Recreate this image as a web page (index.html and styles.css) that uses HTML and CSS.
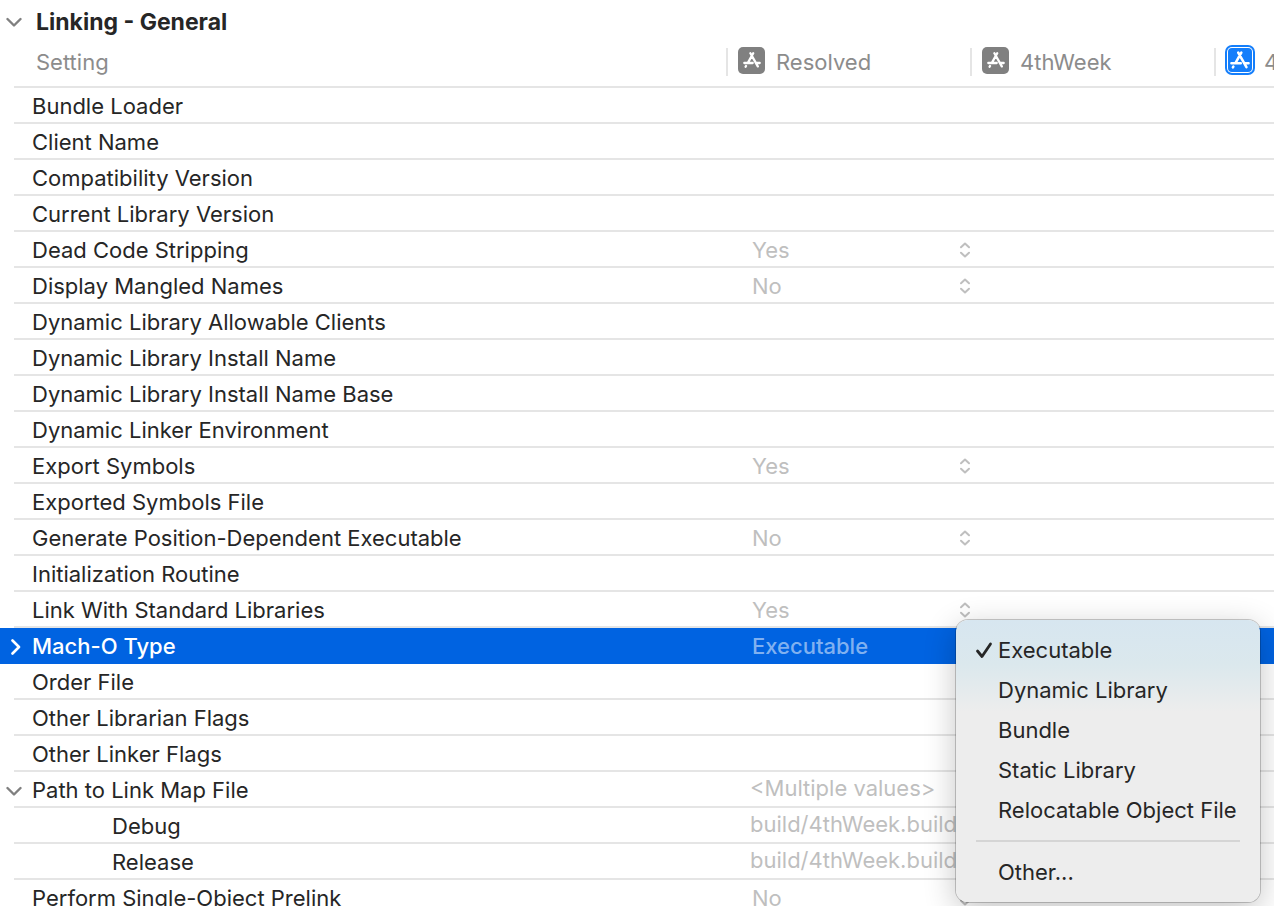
FILE: index.html
```
<!DOCTYPE html>
<html lang="en">
<head>
  <meta charset="UTF-8" />
  <meta name="viewport" content="width=device-width, initial-scale=1.0" />
  <title>Build Settings</title>
  <link rel="stylesheet" href="styles.css">
</head>
<body>
  <svg class="sprite" aria-hidden="true">
    <symbol id="down" viewBox="0 0 16 16">
      <path d="M1.500 5l6.500 6.500L14.500 5" fill="none" stroke="currentColor" stroke-width="2.4" stroke-linecap="round" stroke-linejoin="round" />
    </symbol>
    <symbol id="right" viewBox="0 0 16 16">
      <path d="M6.500 1.500L13 8l-6.500 6.500" fill="none" stroke="currentColor" stroke-width="2.6" stroke-linecap="round" stroke-linejoin="round" />
    </symbol>
    <symbol id="updown" viewBox="0 0 12 16">
      <path d="M2 5.200l4-3.700 4 3.700M2 10.800l4 3.700 4-3.700" fill="none" stroke="currentColor" stroke-width="2" stroke-linecap="round" stroke-linejoin="round" />
    </symbol>
    <symbol id="check" viewBox="0 0 18 18">
      <path d="M2.500 10l4.500 5.500L15.500 3" fill="none" stroke="currentColor" stroke-width="2.800" stroke-linecap="round" stroke-linejoin="round" />
    </symbol>
    <symbol id="app" viewBox="0 0 18 16">
      <g fill="none" stroke="#fff" stroke-width="2.300" stroke-linecap="round">
        <path d="M7.400 1.300L14.800 14.400M10.200 1.300L5 10.600M1.300 11h8.400M13.500 11h3.200M3 14l-.4.700" />
      </g>
    </symbol>
  </svg>

  <main class="settings">
    <h1 class="group-title">
      <button class="toggle" aria-label="Collapse Linking - General"><svg><use href="#down" /></svg></button>Linking - General
    </h1>

    <table>
      <colgroup>
        <col class="col-name">
        <col class="col-value">
        <col class="col-value">
        <col>
      </colgroup>
      <thead>
        <tr>
          <th class="name">Setting</th>
          <th><div class="head"><svg class="app-icon"><use href="#app" /></svg>Resolved</div></th>
          <th><div class="head"><svg class="app-icon"><use href="#app" /></svg>4thWeek</div></th>
          <th><div class="head"><svg class="app-icon project"><use href="#app" /></svg>4thWeek</div></th>
        </tr>
      </thead>
      <tbody>
        <tr><td class="name">Bundle Loader</td><td></td><td></td><td></td></tr>
        <tr><td class="name">Client Name</td><td></td><td></td><td></td></tr>
        <tr><td class="name">Compatibility Version</td><td></td><td></td><td></td></tr>
        <tr><td class="name">Current Library Version</td><td></td><td></td><td></td></tr>
        <tr>
          <td class="name"><label for="dead-code">Dead Code Stripping</label></td>
          <td><div class="popup"><select id="dead-code"><option>Yes</option><option>No</option></select><svg><use href="#updown" /></svg></div></td>
          <td></td><td></td>
        </tr>
        <tr>
          <td class="name"><label for="mangled">Display Mangled Names</label></td>
          <td><div class="popup"><select id="mangled"><option>No</option><option>Yes</option></select><svg><use href="#updown" /></svg></div></td>
          <td></td><td></td>
        </tr>
        <tr><td class="name">Dynamic Library Allowable Clients</td><td></td><td></td><td></td></tr>
        <tr><td class="name">Dynamic Library Install Name</td><td></td><td></td><td></td></tr>
        <tr><td class="name">Dynamic Library Install Name Base</td><td></td><td></td><td></td></tr>
        <tr><td class="name">Dynamic Linker Environment</td><td></td><td></td><td></td></tr>
        <tr>
          <td class="name"><label for="export">Export Symbols</label></td>
          <td><div class="popup"><select id="export"><option>Yes</option><option>No</option></select><svg><use href="#updown" /></svg></div></td>
          <td></td><td></td>
        </tr>
        <tr><td class="name">Exported Symbols File</td><td></td><td></td><td></td></tr>
        <tr>
          <td class="name"><label for="position">Generate Position-Dependent Executable</label></td>
          <td><div class="popup"><select id="position"><option>No</option><option>Yes</option></select><svg><use href="#updown" /></svg></div></td>
          <td></td><td></td>
        </tr>
        <tr><td class="name">Initialization Routine</td><td></td><td></td><td></td></tr>
        <tr>
          <td class="name"><label for="standard">Link With Standard Libraries</label></td>
          <td><div class="popup"><select id="standard"><option>Yes</option><option>No</option></select><svg><use href="#updown" /></svg></div></td>
          <td></td><td></td>
        </tr>
        <tr class="selected">
          <td class="name"><button class="toggle" aria-label="Expand Mach-O Type"><svg><use href="#right" /></svg></button><label for="mach-o">Mach-O Type</label></td>
          <td><div class="popup"><select id="mach-o"><option>Executable</option></select></div></td>
          <td class="menu-cell">
            <div class="menu" role="menu">
              <button role="menuitemradio" aria-checked="true"><svg><use href="#check" /></svg>Executable</button>
              <button role="menuitemradio" aria-checked="false">Dynamic Library</button>
              <button role="menuitemradio" aria-checked="false">Bundle</button>
              <button role="menuitemradio" aria-checked="false">Static Library</button>
              <button role="menuitemradio" aria-checked="false">Relocatable Object File</button>
              <hr>
              <button role="menuitem">Other...</button>
            </div>
          </td>
          <td></td>
        </tr>
        <tr><td class="name">Order File</td><td></td><td></td><td></td></tr>
        <tr><td class="name">Other Librarian Flags</td><td></td><td></td><td></td></tr>
        <tr><td class="name">Other Linker Flags</td><td></td><td></td><td></td></tr>
        <tr>
          <td class="name"><button class="toggle" aria-label="Collapse Path to Link Map File"><svg><use href="#down" /></svg></button>Path to Link Map File</td>
          <td><div class="path">&lt;Multiple values&gt;</div></td>
          <td></td><td></td>
        </tr>
        <tr><td class="name child">Debug</td><td><div class="path">build/4thWeek.build</div></td><td></td><td></td></tr>
        <tr><td class="name child">Release</td><td><div class="path">build/4thWeek.build</div></td><td></td><td></td></tr>
        <tr>
          <td class="name"><label for="prelink">Perform Single-Object Prelink</label></td>
          <td><div class="popup"><select id="prelink"><option>No</option><option>Yes</option></select><svg><use href="#updown" /></svg></div></td>
          <td></td><td></td>
        </tr>
      </tbody>
    </table>
  </main>
</body>
</html>
```
FILE: styles.css
```
* {
  box-sizing: border-box;
}

body {
  margin: 0;
  height: 100vh;
  overflow: hidden;
  background: #fff;
  color: #262626;
  font-family: Inter, "Liberation Sans", sans-serif;
  font-size: 22px;
  line-height: 36px;
}

button,
select {
  font: inherit;
  color: inherit;
  background: none;
  border: none;
  padding: 0;
  margin: 0;
}

.sprite {
  display: none;
}

.settings {
  padding-left: 14px;
}

.group-title {
  display: flex;
  align-items: center;
  height: 44px;
  margin: 0;
  padding-left: 22px;
  font-size: 23px;
  font-weight: 700;
}

.toggle {
  display: inline-flex;
  width: 16px;
  height: 16px;
  margin-left: -26px;
  margin-right: 10px;
  vertical-align: -1px;
  color: #808080;
}

.group-title .toggle {
  margin-left: -30px;
  margin-right: 14px;
}

.toggle svg {
  width: 16px;
  height: 16px;
}

table {
  width: 100%;
  table-layout: fixed;
  border-collapse: separate;
  border-spacing: 0;
}

.col-name {
  width: 712px;
}

.col-value {
  width: 244px;
}

th {
  height: 44px;
  padding: 0;
  border-bottom: 2px solid #e5e5e5;
  color: #8c8c8c;
  font-weight: 400;
  text-align: left;
  vertical-align: top;
}

th.name {
  padding-left: 22px;
}

th:last-child {
  overflow: hidden;
}

.head {
  display: flex;
  align-items: center;
  height: 28px;
  margin-top: 4px;
  padding-left: 10px;
  border-left: 2px solid #e5e5e5;
}

.app-icon {
  flex: none;
  width: 27px;
  height: 27px;
  padding: 5px 4px 6px 5px;
  margin-right: 11px;
  margin-bottom: 4px;
  border-radius: 5px;
  background: #808080;
}

.app-icon.project {
  width: 26px;
  height: 26px;
  padding: 3px;
  margin-left: 1px;
  background: #147efb;
  box-shadow: inset 0 0 0 1px #fff, 0 0 0 2px #147efb;
}

td {
  height: 36px;
  padding: 0;
  box-shadow: inset 0 -2px #e5e5e5;
  white-space: nowrap;
}

td.name {
  padding-left: 18px;
}

td.child {
  padding-left: 98px;
}

.popup {
  display: flex;
  align-items: center;
  height: 36px;
  padding-left: 26px;
  color: #bfbfbf;
}

.popup select {
  flex: 1;
  height: 36px;
  appearance: none;
}

.popup svg {
  width: 12px;
  height: 16px;
  margin-right: -1px;
}

.path {
  height: 36px;
  padding-left: 24px;
  overflow: hidden;
  color: #bfbfbf;
  line-height: 32px;
}

.selected td {
  background: #0063e1;
  box-shadow: none;
  color: #fff;
}

.selected td.name {
  box-shadow: -14px 0 #0063e1;
  font-weight: 500;
}

.selected .toggle {
  color: #fff;
}

.selected .popup {
  color: #80b1f0;
  font-weight: 500;
}

td.menu-cell {
  position: relative;
}

.menu {
  position: absolute;
  top: -8px;
  left: -14px;
  z-index: 1;
  min-width: 304px;
  padding: 10px 0;
  border-radius: 12px;
  background: linear-gradient(#d7e6f0, #dbe8ed 44px, #ededed 92px);
  box-shadow: 0 0 0 1px rgba(0, 0, 0, 0.2), 0 8px 32px rgba(0, 0, 0, 0.24);
  color: #262626;
}

.menu button {
  position: relative;
  display: block;
  width: 100%;
  height: 40px;
  padding: 0 20px 0 42px;
  text-align: left;
}

.menu svg {
  position: absolute;
  left: 19px;
  top: 11px;
  width: 18px;
  height: 18px;
}

.menu hr {
  height: 2px;
  margin: 10px 20px;
  border: none;
  background: #d5d5d5;
}
```
